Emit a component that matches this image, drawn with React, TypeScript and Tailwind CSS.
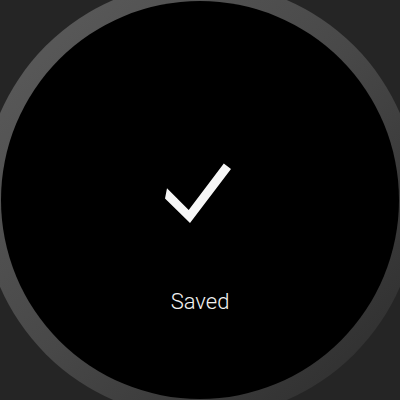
import React from "react";

const CheckMark = () => (
  <svg width="70" height="62" viewBox="163 163 70 62" className="-ml-[4px] block">
    <polygon
      points="167,188.2 165,198.5 190,223 231,169 223.8,163.6 188.7,209.9"
      fill="#f7f7f7"
    />
  </svg>
);

const App = () => {
  return (
    <div className="w-[400px] h-[400px] bg-[#252525] overflow-hidden flex items-center justify-center">
      {/* bezel */}
      <div className="w-[436px] h-[436px] shrink-0 rounded-full bg-gradient-to-br from-[#5e5e5e] via-[#484848] to-[#2a2a2a] flex items-center justify-center">
        <div className="w-[398px] h-[398px] shrink-0 rounded-full bg-black flex flex-col items-center pt-[162px]">
          <CheckMark />
          <div
            className="mt-[64px] text-[22px] leading-[26px] text-[#f2f2f2] font-light"
            style={{ fontFamily: "Roboto, 'Noto Sans', sans-serif" }}
          >
            Saved
          </div>
        </div>
      </div>
    </div>
  );
};

export default App;
